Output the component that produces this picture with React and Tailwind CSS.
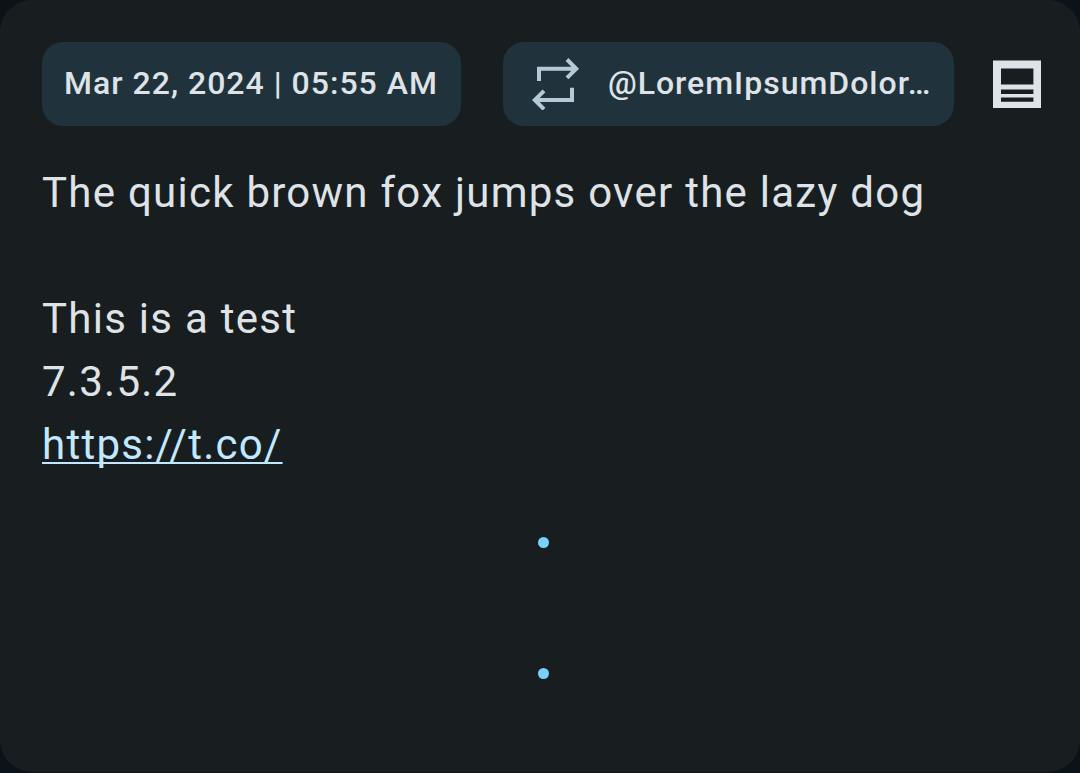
import React from "react";

function RepeatIcon() {
  return (
    <svg width="48" height="52" viewBox="0 0 48 52" fill="none" stroke="#b5cad7" strokeWidth="4" aria-hidden="true" className="shrink-0">
      <path d="M7 23V10.7H44M35 1.5l9.2 9.2-9.2 9.2" />
      <path d="M40 29.7V42H3M12 32.8L2.8 42l9.2 9.2" />
    </svg>
  );
}

function ArticleIcon() {
  return (
    <svg width="48" height="48" viewBox="0 0 48 48" aria-hidden="true">
      <path fill="#dee3ea" fillRule="evenodd" d="M0 .4h48V48H0zM8 8.4v16.2h32.4V8.400zM8 29.400v4.500h32.400v-4.500zM8 37.400v4.300h32.400v-4.300z" />
    </svg>
  );
}

export default function App() {
  return (
    <main className="min-h-screen bg-[#0b1218] font-[Roboto,sans-serif] text-[#dfe3e7]">
      <article className="flex min-h-[772px] flex-col rounded-[32px] bg-[#181d20] py-[42px] pr-[39px] pl-[42px]">
        <header className="flex items-center">
          <button className="h-[84px] shrink-0 rounded-[21px] bg-[#20333d] pr-[23px] pb-[2px] pl-[22px] text-[32px] font-medium tracking-[1px] whitespace-nowrap">
            Mar 22, 2024 | 05:55 AM
          </button>
          <button className="ml-[42px] flex h-[84px] min-w-0 flex-1 items-center gap-[28px] rounded-[21px] bg-[#20333d] pr-[20px] pl-[29px] text-[32px] font-medium tracking-[1px]">
            <RepeatIcon />
            <span className="truncate pb-[2px]">@LoremIpsumDolor…</span>
          </button>
          <button aria-label="Open article" className="ml-[39px] shrink-0">
            <ArticleIcon />
          </button>
        </header>
        <div className="mt-[35px] text-[42px] leading-[63px] tracking-[0.03em]">
          <p>The quick brown fox jumps over the lazy dog</p>
          <p className="mt-[63px]">This is a test</p>
          <p>7.3.5.2</p>
          <a href="https://t.co/" className="text-[#c1e8ff] underline decoration-2 underline-offset-[3px] [text-decoration-skip-ink:none]">https://t.co/</a>
        </div>
        <div className="mt-[61px] flex flex-col items-center gap-[120px] pl-[4px]">
          <span className="size-[11px] rounded-full bg-[#78d0ff]" />
          <span className="size-[11px] rounded-full bg-[#78d0ff]" />
        </div>
      </article>
    </main>
  );
}
